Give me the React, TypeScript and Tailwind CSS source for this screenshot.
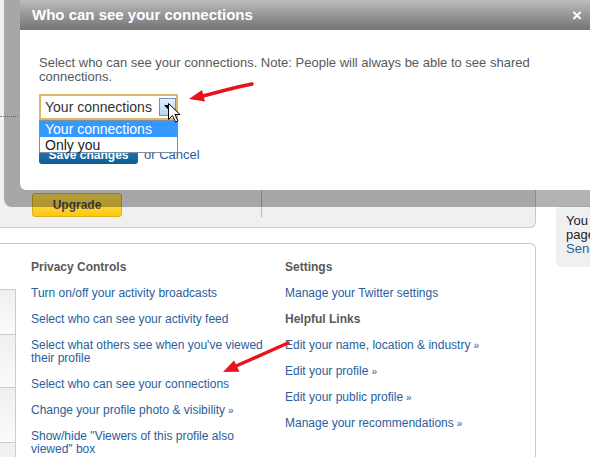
import React from "react";

const linkCls = "text-[#2a5e9c]";

function Raquo() {
  return <span className="text-[10px] ml-[3px]">»</span>;
}

export default function App() {
  const privacy: React.ReactNode[] = [
    "Turn on/off your activity broadcasts",
    "Select who can see your activity feed",
    "Select what others see when you've viewed their profile",
    "Select who can see your connections",
    <>Change your profile photo &amp; visibility<Raquo /></>,
    'Show/hide "Viewers of this profile also viewed" box',
  ];
  return (
    <div className="relative w-[590px] h-[457px] overflow-hidden bg-white font-['Liberation_Sans',Arial,sans-serif]">
      <div className="flex">
        <div className="w-[536px] shrink-0">
          <div className="h-[228px] bg-[#f0f0f0] border-b border-r border-[#c9c9c9] rounded-br-[6px] flex flex-col">
            <div className="mt-[116px] w-[18px] border-t border-dotted border-[#8a8a8a]" />
            <div className="mt-auto mb-[10px] flex h-[40px]">
              <div className="w-[262px] border-r border-[#b9b9b9] flex items-end pl-[32px]">
                <div className="w-[90px] h-[24px] rounded-[3px] border border-[#d9b21c] bg-gradient-to-b from-[#ffe45a] to-[#fcc900] flex items-center justify-center text-[12px] font-bold text-[#4a4a4a]">
                  Upgrade
                </div>
              </div>
            </div>
          </div>
          <div className="mt-[15px] h-[260px] border-t border-r border-[#c9c9c9] rounded-tr-[6px] flex">
            <div className="mt-[45px] w-[16px] shrink-0 border-r border-[#cccccc] flex flex-col">
              <div className="h-[45px] border-t border-[#cccccc] bg-gradient-to-b from-[#efefef] to-[#fbfbfb]" />
              <div className="h-[53px] border-t border-[#cccccc] bg-gradient-to-b from-[#efefef] to-[#fbfbfb]" />
              <div className="h-[55px] border-t border-[#cccccc] bg-gradient-to-b from-[#efefef] to-[#fbfbfb]" />
              <div className="h-[60px] border-t border-[#cccccc] bg-gradient-to-b from-[#efefef] to-[#fbfbfb]" />
            </div>
            <div className="ml-[15px] pt-[17px] w-[242px] shrink-0 flex flex-col gap-[13px] text-[12px] leading-[13px]">
              <div className="font-bold text-[#595959]">Privacy Controls</div>
              {privacy.map((p, i) => (
                <div key={i} className={linkCls}>{p}</div>
              ))}
            </div>
            <div className="ml-[12px] pt-[17px] flex flex-col gap-[13px] text-[12px] leading-[13px] whitespace-nowrap">
              <div className="font-bold text-[#595959]">Settings</div>
              <div className={linkCls}>Manage your Twitter settings</div>
              <div className="font-bold text-[#595959]">Helpful Links</div>
              <div className={linkCls}>Edit your name, location &amp; industry<Raquo /></div>
              <div className={linkCls}>Edit your profile<Raquo /></div>
              <div className={linkCls}>Edit your public profile<Raquo /></div>
              <div className={linkCls}>Manage your recommendations<Raquo /></div>
            </div>
          </div>
        </div>
        <div className="ml-[20px] mt-[206px] w-[200px] shrink-0 h-[61px] bg-[#f0f0f0] rounded-l-[6px] pl-[10px] pt-[8px] text-[13px] leading-[14px] text-[#222] whitespace-nowrap">
          <div>You have no recommendations on this</div>
          <div>page. Ask your connections.</div>
          <div className="text-[#2a5e9c]">Send invitations</div>
        </div>
      </div>

      {/* overlay */}
      <div className="absolute left-[4px] top-0 w-[600px] h-[207px] bg-black/30 rounded-bl-[8px] z-10" />

      {/* modal */}
      <div className="absolute left-[20px] top-0 w-[570px] h-[190px] bg-white rounded-bl-[6px] z-20">
        <div className="h-[30px] bg-gradient-to-b from-[#bcbcbc] to-[#747474] flex items-center justify-between pl-[12px] pr-[8px]">
          <span className="text-[15px] font-bold text-white">Who can see your connections</span>
          <span className="text-[17px] font-bold text-white leading-none">×</span>
        </div>
        <div className="pl-[19px] pt-[26px]">
          <p className="w-[520px] text-[13px] leading-[14px] text-[#595959]">
            Select who can see your connections. Note: People will always be able to see shared connections.
          </p>
          <div className="mt-[10px] relative w-[139px] h-[26px] border-2 border-[#dcb768] bg-white flex items-center pl-[4px] text-[14px] text-[#333]">
            Your connections
            <div className="absolute right-[0px] top-[2px] w-[17px] h-[18px] border border-[#6f93bd] bg-gradient-to-b from-[#e4effb] to-[#b9d3f0] flex items-center justify-center">
              <svg width="7" height="4" viewBox="0 0 7 4"><path d="M0 0 L7 0 L3.5 4 Z" fill="#000" /></svg>
            </div>
          </div>
          <div className="mt-[22px] flex items-center">
            <div className="w-[99px] h-[21px] pt-[4px] rounded-[3px] bg-gradient-to-b from-[#2f82bd] to-[#0b5e93] text-white text-[12px] font-bold flex items-center justify-center">
              Save changes
            </div>
            <span className="ml-[6px] mt-[3px] text-[13px] text-[#3a5a85]">or <span className="text-[#2a5e9c]">Cancel</span></span>
          </div>
        </div>
        {/* dropdown list */}
        <div className="absolute left-[19px] top-[120px] w-[139px] h-[33px] border border-[#7b8fa9] bg-white text-[14px] leading-[16px]">
          <div className="h-[16px] bg-[#3399ff] text-white pl-[5px]">Your connections</div>
          <div className="h-[15px] text-[#222] pl-[5px]">Only you</div>
        </div>
      </div>

      <svg className="absolute left-0 top-0 z-30 pointer-events-none" width="590" height="457">
        <polyline points="252,84 238,87 222,91 203,96" fill="none" stroke="#e8141b" strokeWidth="3.5" strokeLinecap="round" />
        <polygon points="189,99 202,89.9 205,101.5" fill="#e8141b" />
        <polyline points="288,343 270,351 252,359 236,366" fill="none" stroke="#e8141b" strokeWidth="3.5" strokeLinecap="round" />
        <polygon points="223,372 234,360.5 239.5,371.7" fill="#e8141b" />
        <path
          d="M168.5 103.5 L168.5 119.5 L172.5 115.5 L175.5 122 L178 121 L175 114.5 L180 114.5 Z"
          fill="#fff"
          stroke="#000"
          strokeWidth="1"
          strokeLinejoin="miter"
        />
      </svg>
    </div>
  );
}
